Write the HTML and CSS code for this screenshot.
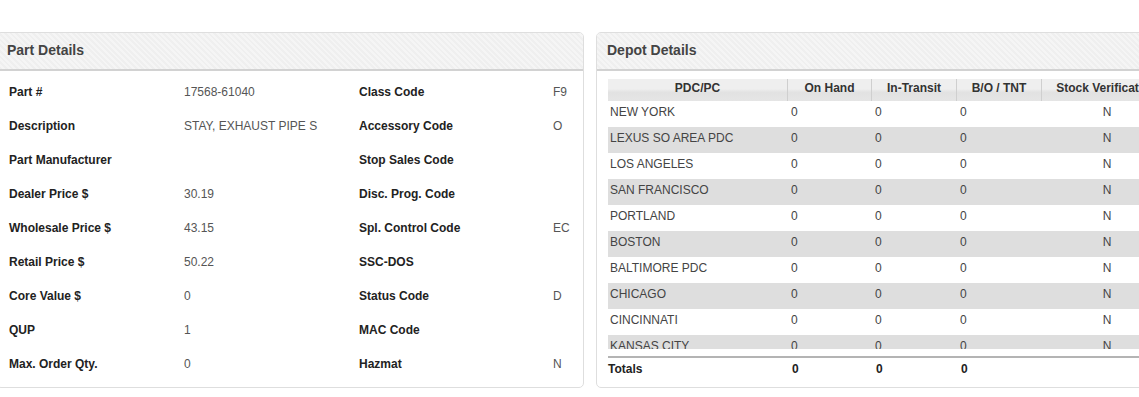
FILE: index.html
```html
<!DOCTYPE html>
<html lang="en">
<head>
  <meta charset="UTF-8" />
  <meta name="viewport" content="width=device-width, initial-scale=1.0"/>
  <title>Part Inquiry</title>
  <link rel="stylesheet" href="styles.css">
</head>
<body>
  <div class="panels">
    <div class="panel part-panel">
      <div class="panel-head">Part Details</div>
      <div class="detail-grid">
        <div class="lbl">Part #</div><div class="val">17568-61040</div>
        <div class="lbl">Class Code</div><div class="val">F9</div>

        <div class="lbl">Description</div><div class="val">STAY, EXHAUST PIPE S</div>
        <div class="lbl">Accessory Code</div><div class="val">O</div>

        <div class="lbl">Part Manufacturer</div><div class="val"></div>
        <div class="lbl">Stop Sales Code</div><div class="val"></div>

        <div class="lbl">Dealer Price $</div><div class="val">30.19</div>
        <div class="lbl">Disc. Prog. Code</div><div class="val"></div>

        <div class="lbl">Wholesale Price $</div><div class="val">43.15</div>
        <div class="lbl">Spl. Control Code</div><div class="val">EC</div>

        <div class="lbl">Retail Price $</div><div class="val">50.22</div>
        <div class="lbl">SSC-DOS</div><div class="val"></div>

        <div class="lbl">Core Value $</div><div class="val">0</div>
        <div class="lbl">Status Code</div><div class="val">D</div>

        <div class="lbl">QUP</div><div class="val">1</div>
        <div class="lbl">MAC Code</div><div class="val"></div>

        <div class="lbl">Max. Order Qty.</div><div class="val">0</div>
        <div class="lbl">Hazmat</div><div class="val">N</div>
      </div>
    </div>

    <div class="panel depot-panel">
      <div class="panel-head">Depot Details</div>
      <div class="depot-body">
        <div class="row head-row">
          <div>PDC/PC</div>
          <div>On Hand</div>
          <div>In-Transit</div>
          <div>B/O / TNT</div>
          <div>Stock Verification</div>
        </div>
        <div class="rows" id="depotRows"></div>
        <div class="row totals-row">
          <div>Totals</div>
          <div>0</div>
          <div>0</div>
          <div>0</div>
          <div></div>
        </div>
      </div>
    </div>
  </div>

  <script>
    const depots = [
      "NEW YORK", "LEXUS SO AREA PDC", "LOS ANGELES", "SAN FRANCISCO",
      "PORTLAND", "BOSTON", "BALTIMORE PDC", "CHICAGO", "CINCINNATI",
      "KANSAS CITY"
    ];
    const rowsBox = document.getElementById("depotRows");

    depots.forEach(name => {
      const row = document.createElement("div");
      row.className = "row data-row";
      [name, "0", "0", "0", "N"].forEach(text => {
        const cell = document.createElement("div");
        cell.textContent = text;
        row.appendChild(cell);
      });
      rowsBox.appendChild(row);
    });
  </script>
</body>
</html>
```

FILE: styles.css
```css
body {
  margin: 0;
  padding-top: 32px;
  font-family: "Liberation Sans", Arial, sans-serif;
  font-size: 12px;
  background: #fff;
  overflow: hidden;
}
.panels {
  display: flex;
  gap: 12px;
  margin-left: -4px;
  width: 1190px;
}
.panel {
  width: 586px;
  height: 354px;
  border: 1px solid #dedede;
  border-radius: 5px;
  background: #fff;
  overflow: hidden;
  flex-shrink: 0;
}
.panel-head {
  height: 36px;
  line-height: 34px;
  padding-left: 10px;
  font-size: 14px;
  font-weight: bold;
  color: #444;
  background: repeating-linear-gradient(45deg, #f5f5f5 0, #f5f5f5 2px, #efefef 2px, #efefef 4px);
  border-bottom: 2px solid #d2d2d2;
}
.detail-grid {
  display: grid;
  grid-template-columns: 175px 175px 194px 1fr;
  grid-auto-rows: 34px;
  padding: 4px 0 0 12px;
}
.lbl, .val {
  line-height: 34px;
  white-space: nowrap;
}
.lbl {
  font-weight: bold;
  color: #222;
}
.val {
  color: #555;
}
.depot-body {
  padding: 8px 0 0 11px;
}
.row {
  display: grid;
  grid-template-columns: 180px 84px 85px 85px 130px;
}
.head-row {
  height: 22px;
  line-height: 19px;
  font-weight: bold;
  color: #333;
  text-align: center;
  background: linear-gradient(to bottom, #efefef 0, #efefef 45%, #e2e2e2 60%, #e5e5e5 100%);
}
.head-row div {
  border-right: 1px solid #cfcfcf;
  white-space: nowrap;
  overflow: hidden;
}
.rows {
  height: 248px;
  overflow: hidden;
}
.data-row {
  height: 26px;
  line-height: 23px;
  color: #444;
}
.data-row:nth-child(even) {
  background: #dedede;
}
.data-row div {
  padding-left: 3px;
  white-space: nowrap;
}
.data-row div:first-child {
  padding-left: 2px;
}
.data-row div:last-child {
  text-align: center;
  padding-left: 0;
}
.totals-row {
  margin-top: 7px;
  border-top: 2px solid #b4b4b4;
  height: 24px;
  line-height: 22px;
  font-weight: bold;
  color: #222;
}
.totals-row div {
  padding-left: 4px;
}
.totals-row div:first-child {
  padding-left: 0;
}
```
